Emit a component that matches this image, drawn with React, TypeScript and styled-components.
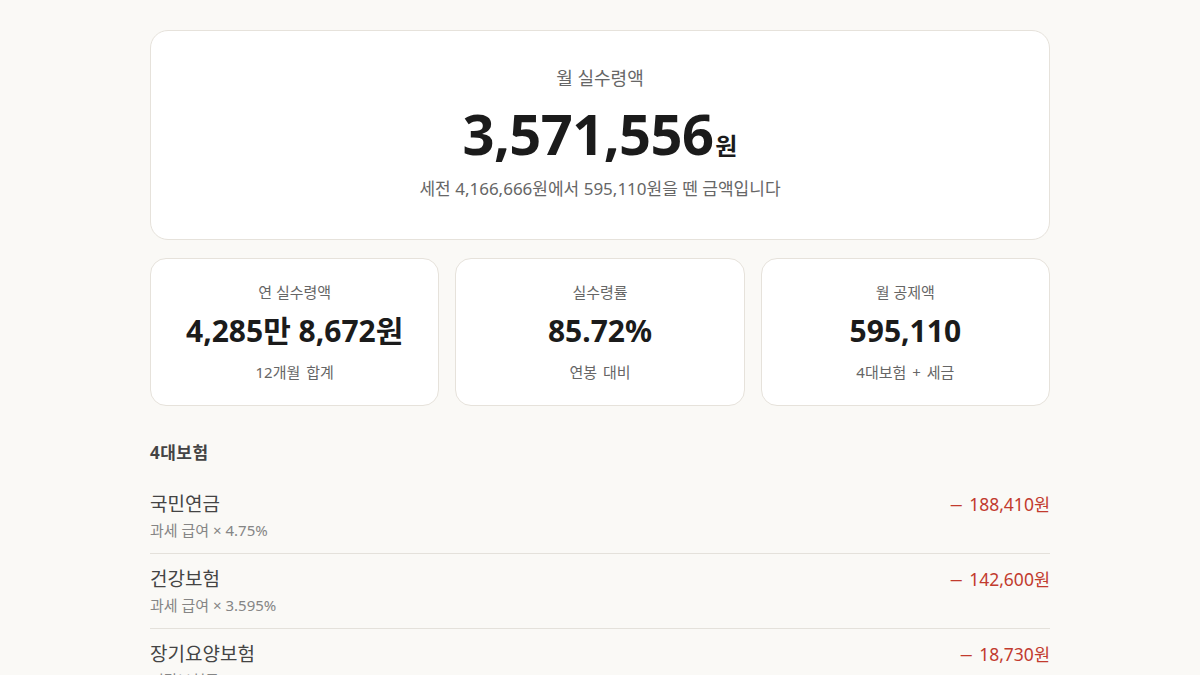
import React from 'react'
import styled, { createGlobalStyle } from 'styled-components'

const COLORS = {
  page: '#faf9f6',
  card: '#ffffff',
  border: '#e6e2db',
  divider: '#e4e1db',
  ink: '#1b1b1b',
  text: '#444444',
  muted: '#666666',
  faint: '#858585',
  minus: '#c23b2e',
}

const GlobalStyle = createGlobalStyle`
  html {
    scrollbar-width: none;
  }
  html::-webkit-scrollbar {
    display: none;
  }
  body {
    margin: 0;
    background: ${COLORS.page};
    font-family: 'Noto Sans', 'Noto Sans CJK KR', sans-serif;
    color: ${COLORS.text};
  }
`

type Deduction = {
  name: string
  formula: string
  amount: string
}

const INSURANCES: Deduction[] = [
  { name: '국민연금', formula: '과세 급여 × 4.75%', amount: '188,410' },
  { name: '건강보험', formula: '과세 급여 × 3.595%', amount: '142,600' },
  { name: '장기요양보험', formula: '건강보험료 × 13.14%', amount: '18,730' },
  { name: '고용보험', formula: '과세 급여 × 0.9%', amount: '35,700' },
]

const TAXES: Deduction[] = [
  { name: '소득세', formula: '간이세액표 기준', amount: '190,610' },
  { name: '지방소득세', formula: '소득세 × 10%', amount: '19,060' },
]

const StyledPage = styled.main`
  width: 900px;
  margin: 0 auto;
  padding: 30px 0 60px;
`

const StyledHero = styled.section`
  background: ${COLORS.card};
  border: 1px solid ${COLORS.border};
  border-radius: 18px;
  padding: 35px 24px 37px;
  text-align: center;
`

const StyledHeroLabel = styled.div`
  font-size: 18px;
  line-height: 24px;
  color: ${COLORS.muted};
`

const StyledHeroAmount = styled.div`
  margin-top: 12px;
  font-size: 56px;
  line-height: 62px;
  height: 62px;
  font-weight: 700;
  letter-spacing: -0.6px;
  color: ${COLORS.ink};
`

const StyledUnit = styled.span`
  font-size: 24px;
  line-height: 0;
  font-weight: 700;
  margin-left: 2px;
  letter-spacing: 0;
`

const StyledHeroNote = styled.div`
  margin-top: 12px;
  font-size: 17px;
  line-height: 26px;
  color: ${COLORS.muted};
`

const StyledStats = styled.section`
  margin-top: 18px;
  display: grid;
  grid-template-columns: repeat(3, 1fr);
  gap: 16px;
`

const StyledStatCard = styled.div`
  background: ${COLORS.card};
  border: 1px solid ${COLORS.border};
  border-radius: 16px;
  padding: 23px 16px 22px;
  display: flex;
  flex-direction: column;
  align-items: center;
`

const StyledStatLabel = styled.div`
  font-size: 15px;
  line-height: 20px;
  color: ${COLORS.muted};
`

const StyledStatValue = styled.div`
  margin-top: 9px;
  font-size: 30px;
  line-height: 40px;
  font-weight: 700;
  color: ${COLORS.ink};
`

const StyledStatNote = styled.div`
  margin-top: 10px;
  font-size: 15px;
  line-height: 22px;
  word-spacing: 2px;
  color: ${COLORS.muted};
`

const StyledSection = styled.section`
  margin-top: 36px;
`

const StyledSectionTitle = styled.h2`
  margin: 0 0 15px;
  font-size: 17px;
  line-height: 22px;
  font-weight: 700;
  letter-spacing: 0.5px;
  color: ${COLORS.text};
`

const StyledRow = styled.div`
  display: flex;
  justify-content: space-between;
  align-items: flex-start;
  padding: 13px 0 13px;
  border-bottom: 1px solid ${COLORS.divider};
`

const StyledRowText = styled.div`
  display: flex;
  flex-direction: column;
  gap: 4px;
`

const StyledRowName = styled.div`
  font-size: 19px;
  line-height: 24px;
  color: ${COLORS.text};
`

const StyledRowFormula = styled.div`
  font-size: 15px;
  line-height: 20px;
  color: ${COLORS.faint};
`

const StyledRowAmount = styled.div`
  font-size: 17.5px;
  line-height: 24px;
  color: ${COLORS.minus};
  white-space: nowrap;
`

const StyledSign = styled.span`
  font-size: 12px;
  font-weight: 700;
  line-height: 0;
  vertical-align: 2px;
  margin-right: 7px;
`

const DeductionList = ({ title, items }: { title: string; items: Deduction[] }) => (
  <StyledSection>
    <StyledSectionTitle>{title}</StyledSectionTitle>
    {items.map((item) => (
      <StyledRow key={item.name}>
        <StyledRowText>
          <StyledRowName>{item.name}</StyledRowName>
          <StyledRowFormula>{item.formula}</StyledRowFormula>
        </StyledRowText>
        <StyledRowAmount>
          <StyledSign>—</StyledSign>
          {item.amount}원
        </StyledRowAmount>
      </StyledRow>
    ))}
  </StyledSection>
)

export default function App() {
  return (
    <>
      <GlobalStyle />
      <StyledPage>
        <StyledHero>
          <StyledHeroLabel>월 실수령액</StyledHeroLabel>
          <StyledHeroAmount>
            3,571,556<StyledUnit>원</StyledUnit>
          </StyledHeroAmount>
          <StyledHeroNote>세전 4,166,666원에서 595,110원을 뗀 금액입니다</StyledHeroNote>
        </StyledHero>

        <StyledStats>
          <StyledStatCard>
            <StyledStatLabel>연 실수령액</StyledStatLabel>
            <StyledStatValue>4,285만 8,672원</StyledStatValue>
            <StyledStatNote>12개월 합계</StyledStatNote>
          </StyledStatCard>
          <StyledStatCard>
            <StyledStatLabel>실수령률</StyledStatLabel>
            <StyledStatValue>85.72%</StyledStatValue>
            <StyledStatNote>연봉 대비</StyledStatNote>
          </StyledStatCard>
          <StyledStatCard>
            <StyledStatLabel>월 공제액</StyledStatLabel>
            <StyledStatValue>595,110</StyledStatValue>
            <StyledStatNote>4대보험 + 세금</StyledStatNote>
          </StyledStatCard>
        </StyledStats>

        <DeductionList title="4대보험" items={INSURANCES} />
        <DeductionList title="세금" items={TAXES} />
      </StyledPage>
    </>
  )
}
